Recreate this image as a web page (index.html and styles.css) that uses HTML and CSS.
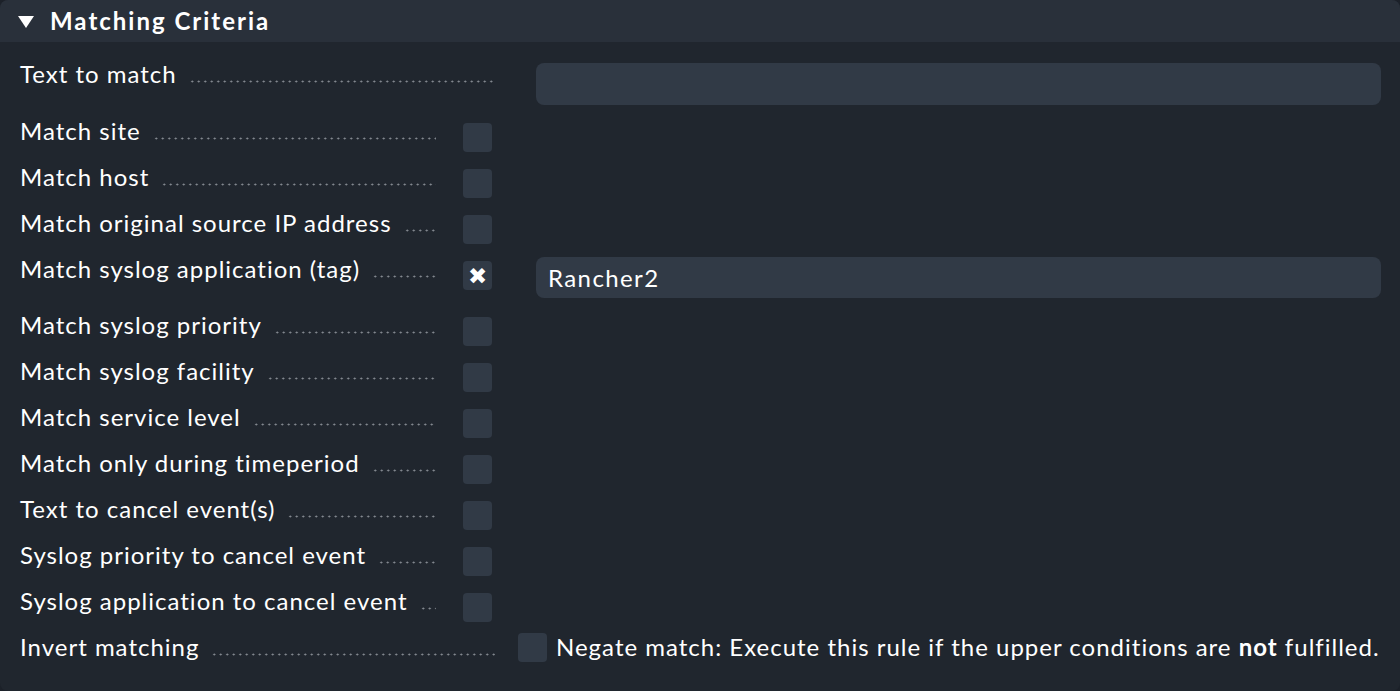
FILE: index.html
```html
<!DOCTYPE html>
<html lang="en">
<head>
<meta charset="utf-8">
<title>Matching Criteria</title>
<link rel="stylesheet" href="styles.css">
</head>
<body>
<div class="box">
  <div class="head">
    <span class="tri"></span>
    <span class="head-title">Matching Criteria</span>
  </div>
  <div class="rows">
    <div class="row row-input">
      <div class="lab"><span class="txt">Text to match</span><span class="dots"></span></div>
      <div class="val"><div class="input"></div></div>
    </div>
    <div class="row">
      <div class="lab"><span class="txt">Match site</span><span class="dots"></span><span class="cb"></span></div>
      <div class="val"></div>
    </div>
    <div class="row">
      <div class="lab"><span class="txt">Match host</span><span class="dots"></span><span class="cb"></span></div>
      <div class="val"></div>
    </div>
    <div class="row">
      <div class="lab"><span class="txt">Match original source IP address</span><span class="dots"></span><span class="cb"></span></div>
      <div class="val"></div>
    </div>
    <div class="row row-tag">
      <div class="lab"><span class="txt">Match syslog application (tag)</span><span class="dots"></span><span class="cb on">&#10006;</span></div>
      <div class="val"><div class="input input-tag">Rancher2</div></div>
    </div>
    <div class="row">
      <div class="lab"><span class="txt">Match syslog priority</span><span class="dots"></span><span class="cb"></span></div>
      <div class="val"></div>
    </div>
    <div class="row">
      <div class="lab"><span class="txt">Match syslog facility</span><span class="dots"></span><span class="cb"></span></div>
      <div class="val"></div>
    </div>
    <div class="row">
      <div class="lab"><span class="txt">Match service level</span><span class="dots"></span><span class="cb"></span></div>
      <div class="val"></div>
    </div>
    <div class="row">
      <div class="lab"><span class="txt">Match only during timeperiod</span><span class="dots"></span><span class="cb"></span></div>
      <div class="val"></div>
    </div>
    <div class="row">
      <div class="lab"><span class="txt">Text to cancel event(s)</span><span class="dots"></span><span class="cb"></span></div>
      <div class="val"></div>
    </div>
    <div class="row">
      <div class="lab"><span class="txt">Syslog priority to cancel event</span><span class="dots"></span><span class="cb"></span></div>
      <div class="val"></div>
    </div>
    <div class="row">
      <div class="lab"><span class="txt">Syslog application to cancel event</span><span class="dots"></span><span class="cb"></span></div>
      <div class="val"></div>
    </div>
    <div class="row row-invert">
      <div class="lab"><span class="txt">Invert matching</span><span class="dots"></span></div>
      <div class="val val-invert"><span class="cb"></span><span class="neg">Negate match: Execute this rule if the upper conditions are <b>not</b> fulfilled.</span></div>
    </div>
  </div>
</div>
</body>
</html>
```
FILE: styles.css
```css
* { box-sizing: border-box; }
html, body { margin: 0; padding: 0; }
body {
  background: #1c2129;
  font-family: Lato, "Noto Sans", sans-serif;
  color: #ffffff;
  width: 1400px;
  height: 691px;
  overflow: hidden;
}
.box {
  background: #20262e;
  border-radius: 8px;
  height: 691px;
  overflow: hidden;
}
.head {
  background: #29303a;
  height: 42px;
  display: flex;
  align-items: center;
  padding-left: 18px;
}
.tri {
  width: 0;
  height: 0;
  border-left: 8px solid transparent;
  border-right: 8px solid transparent;
  border-top: 12px solid #ffffff;
  margin-right: 16px;
  margin-top: 2px;
}
.head-title {
  font-weight: bold;
  font-size: 24px;
  letter-spacing: 2px;
  margin-top: -1px;
}
.rows {
  padding: 16px 19px 14px 20px;
}
.row {
  display: grid;
  grid-template-columns: 475px 1fr;
  padding: 5px 0;
  min-height: 46px;
}
.lab {
  display: flex;
  align-items: flex-start;
  font-size: 24px;
  letter-spacing: 1px;
  line-height: 24px;
}
.txt { white-space: nowrap; margin-top: -1px; }
.dots {
  flex: 1;
  height: 24px;
  margin-left: 12px;
  margin-top: -1px;
  background-image: radial-gradient(circle, #8b9097 0.8px, transparent 1.2px);
  background-size: 6.5px 3px;
  background-repeat: repeat-x;
  background-position: 0 18px;
}
.cb {
  width: 29px;
  height: 29px;
  border-radius: 4px;
  background: #313a46;
  margin-left: 27px;
  margin-right: 3px;
  margin-top: 3px;
  flex: none;
  display: flex;
  align-items: center;
  justify-content: center;
  font-size: 23px;
  line-height: 1;
  color: #ffffff;
  letter-spacing: 0;
}
.val { padding-left: 41px; }
.input {
  height: 42px;
  border-radius: 8px;
  background: #313a46;
  margin-bottom: 5px;
}
.input-tag {
  height: 41px;
  margin-top: -1px;
  margin-bottom: 6px;
  font-size: 24px;
  letter-spacing: 1.4px;
  line-height: 41px;
  padding-left: 12px;
}
.val-invert {
  padding-left: 23px;
  display: flex;
  align-items: flex-start;
  font-size: 24px;
  letter-spacing: 1px;
  line-height: 24px;
}
.val-invert .cb { margin-left: 0; margin-top: -3px; margin-right: 9px; }
.neg { white-space: nowrap; margin-top: -1px; }
.neg b { font-weight: bold; }
```
